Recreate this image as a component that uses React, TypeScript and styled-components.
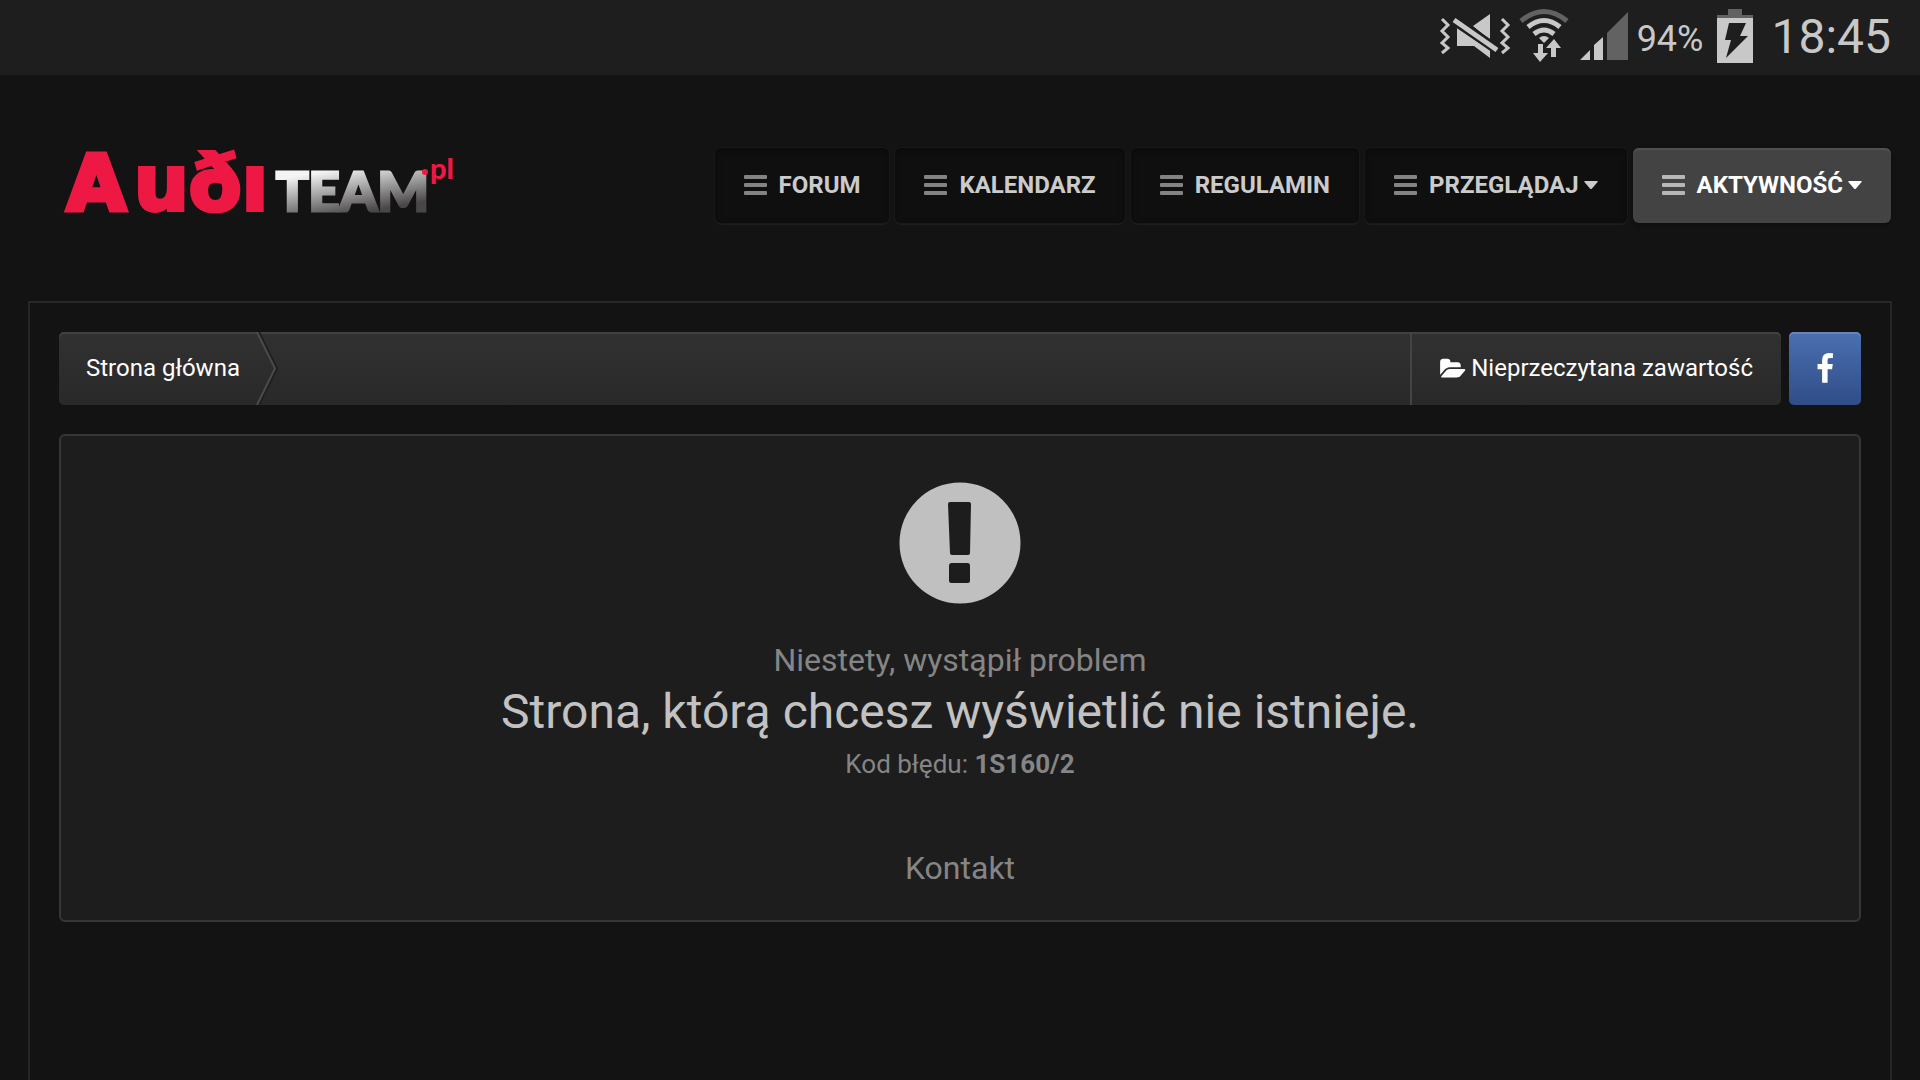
import React from 'react';
import styled, { createGlobalStyle } from 'styled-components';

const GlobalStyle = createGlobalStyle`
  *, *::before, *::after { box-sizing: border-box; }
  body {
    margin: 0;
    background: #131313;
    color: #c2c2c2;
    font-family: Roboto, "Noto Sans", sans-serif;
  }
  a { color: inherit; text-decoration: none; }
  svg { display: block; flex: none; }
`;

const Page = styled.div`
  min-height: 100vh;
  display: flex;
  flex-direction: column;
`;

const StatusBar = styled.div`
  height: 75px;
  padding: 0 29px 0 0;
  display: flex;
  justify-content: flex-end;
  align-items: center;
  background: #1e1e1e;
  color: #c8c8c8;
`;

const StatusIcons = styled.svg`
  margin-right: 8px;
`;

const Percent = styled.span`
  padding-top: 2px;
  font-size: 36px;
  line-height: 72px;
`;

const BatteryIcon = styled.svg`
  margin: 0 18px 4px 14px;
`;

const Clock = styled.time`
  font-size: 48px;
  line-height: 72px;
  padding-bottom: 2px;
`;

const Header = styled.header`
  padding: 56px 29px 61px 59px;
  display: flex;
  justify-content: space-between;
  align-items: center;
`;

const LogoLink = styled.a`
  display: block;
`;

const Nav = styled.nav`
  display: flex;
  gap: 6px;
`;

const NavItem = styled.a<{ $active?: boolean }>`
  height: 75px;
  padding: 0 29px 2px;
  display: flex;
  align-items: center;
  border-radius: 6px;
  font-size: 24px;
  line-height: 28px;
  font-weight: 700;
  text-transform: uppercase;
  color: ${(p) => (p.$active ? '#ffffff' : '#cbcbcb')};
  background: ${(p) => (p.$active ? '#434343' : '#0f0f0f')};
  box-shadow: ${(p) =>
    p.$active
      ? 'inset 0 2px 0 #505050, 0 2px 4px rgba(0, 0, 0, 0.3)'
      : 'inset 0 2px 6px rgba(0, 0, 0, 0.35), 0 0 0 1px #191919, 0 2px 0 #1e1e1e'};
`;

const Bars = styled.svg`
  margin-right: 12px;
  opacity: 0.62;
`;

const Caret = styled.svg`
  margin-left: 5px;
`;

const Content = styled.main`
  flex: 1;
  margin: 0 28px;
  padding: 29px;
  border: 2px solid #272727;
  border-bottom: 0;
`;

const TopRow = styled.div`
  display: flex;
  gap: 8px;
  margin-bottom: 29px;
`;

const Breadcrumb = styled.nav`
  flex: 1;
  height: 73px;
  display: flex;
  align-items: stretch;
  justify-content: space-between;
  border-radius: 5px;
  background: linear-gradient(#313131, #292929);
  box-shadow: inset 0 2px 0 #414141;
  color: #ffffff;
  font-size: 24px;
  line-height: 28px;
`;

const Crumb = styled.a`
  display: flex;
  align-items: center;
  gap: 16px;
  padding-left: 27px;
`;

const Label = styled.span`
  padding-bottom: 2px;
`;

const Unread = styled.a`
  display: flex;
  align-items: center;
  gap: 5px;
  padding: 0 28px;
  border-left: 2px solid #444444;
`;

const FacebookLink = styled.a`
  width: 72px;
  height: 73px;
  display: flex;
  align-items: center;
  justify-content: center;
  border-radius: 5px;
  background: linear-gradient(#4a6fb0, #304d88);
  box-shadow: inset 0 2px 0 #6684bb;
`;

const Panel = styled.section`
  padding: 46px 29px 32px;
  display: flex;
  flex-direction: column;
  align-items: center;
  border: 2px solid #363636;
  border-radius: 6px;
  background: #1d1d1d;
  text-align: center;
`;

const Lead = styled.p`
  margin: 36px 0 0;
  font-size: 32px;
  line-height: 40px;
  color: #858585;
`;

const Title = styled.h1`
  margin: 0;
  font-size: 48px;
  line-height: 64px;
  font-weight: 400;
  color: #c2c2c2;
`;

const Code = styled.p`
  margin: 0;
  font-size: 26px;
  line-height: 40px;
  color: #858585;
`;

const Contact = styled.a`
  margin-top: 64px;
  font-size: 32px;
  line-height: 40px;
  color: #858585;
`;

const MenuItem = ({ label, caret, active }: { label: string; caret?: boolean; active?: boolean }) => (
  <NavItem href="#" $active={active}>
    <Bars width="23" height="20" viewBox="0 0 23 20" fill="currentColor" aria-hidden="true">
      <rect y="0" width="23" height="4" rx="1" />
      <rect y="8" width="23" height="4" rx="1" />
      <rect y="16" width="23" height="4" rx="1" />
    </Bars>
    {label}
    {caret && (
      <Caret width="14" height="8" viewBox="0 0 14 8" fill="currentColor" aria-hidden="true">
        <path d="M1 0h12q1 0 .6 1L8 7.400q-1 1-2 0L.4 1Q0 0 1 0z" />
      </Caret>
    )}
  </NavItem>
);

const Logo = () => (
  <svg width="400" height="109" viewBox="0 -24 400 109" role="img" aria-label="AudiTEAM.pl">
    <defs>
      <linearGradient id="steel" gradientUnits="userSpaceOnUse" x1="280" y1="14" x2="288" y2="60">
        <stop offset="0" stopColor="#f4f4f4" />
        <stop offset="1" stopColor="#4a4749" />
      </linearGradient>
    </defs>
    <g fill="#ee1845" stroke="#ee1845" fontFamily="DejaVu Sans" fontWeight="700">
      <text x="8" y="55" fontSize="76" strokeWidth="5">A</text>
      <text x="75" y="55" fontSize="77" strokeWidth="4">uðı</text>
    </g>
    <text
      x="217"
      y="56"
      fill="url(#steel)"
      stroke="url(#steel)"
      strokeWidth="3"
      fontFamily="Lato"
      fontWeight="900"
      fontSize="54"
    >
      TEAM
    </text>
    <g fill="#ee1845" fontFamily="Lato" fontWeight="900">
      <circle cx="366" cy="17" r="3" />
      <text x="371" y="24" fontSize="29">pl</text>
    </g>
  </svg>
);

export default function App() {
  return (
    <Page>
      <GlobalStyle />
      <StatusBar>
        <StatusIcons width="190" height="75" viewBox="1439 0 190 75" aria-hidden="true">
          <g fill="none" stroke="#c8c8c8" strokeWidth="3">
            <path d="M1442 19l6 6-6 6 6 6-6 6 6 5-6 5" />
            <path d="M1502 19l6 6-6 6 6 6-6 6 6 5-6 5" />
          </g>
          <path fill="#c8c8c8" d="M1473 26l17-12v26z" />
          <path fill="#c8c8c8" d="M1457 28v18h17l16 12v-8z" />
          <path d="M1454 20l45 31" stroke="#1e1e1e" strokeWidth="10" />
          <path d="M1454 20l43 30" stroke="#c8c8c8" strokeWidth="5" />
          <g fill="none" strokeWidth="5">
            <path stroke="#626262" d="M1521 21q23-19 46 0" />
            <path stroke="#c8c8c8" d="M1528 27q16-13 32 0" />
            <path stroke="#c8c8c8" d="M1534 34q10-8 20 0" />
          </g>
          <path fill="#c8c8c8" d="M1539 38q5-4 10 0l-5 5z" />
          <path fill="#c8c8c8" d="M1538 44h5v9h5l-8 9-7-9h5z" />
          <path fill="#c8c8c8" d="M1554 39l7 9h-5v9h-5v-9h-5z" />
          <path fill="#c8c8c8" d="M1580 60l10-10v10zM1594 60v-15l9-8v23z" />
          <path fill="#626262" d="M1607 60V33l21-21v48z" />
        </StatusIcons>
        <Percent>94%</Percent>
        <BatteryIcon width="36" height="54" viewBox="0 0 36 54" aria-hidden="true">
          <path fill="#626262" d="M11 0h14v6h11v3H0V6h11z" />
          <path fill="#c8c8c8" d="M0 9h36v45H0z" />
          <path fill="#1e1e1e" d="M12 14h17l-6 13h8L9 49l5-18H8z" />
        </BatteryIcon>
        <Clock>18:45</Clock>
      </StatusBar>

      <Header>
        <LogoLink href="#">
          <Logo />
        </LogoLink>
        <Nav>
          <MenuItem label="Forum" />
          <MenuItem label="Kalendarz" />
          <MenuItem label="Regulamin" />
          <MenuItem label="Przeglądaj" caret />
          <MenuItem label="Aktywność" caret active />
        </Nav>
      </Header>

      <Content>
        <TopRow>
          <Breadcrumb>
            <Crumb href="#">
              <Label>Strona główna</Label>
              <svg width="22" height="73" viewBox="0 0 22 73" fill="none" aria-hidden="true">
                <path d="M3 0l18 36.500L3 73" stroke="#1f1f1f" strokeWidth="2" />
                <path d="M1 0l18 36.500L1 73" stroke="#4b4b4b" strokeWidth="2" />
              </svg>
            </Crumb>
            <Unread href="#">
              <svg width="26" height="24" viewBox="0 0 1920 1792" fill="currentColor" aria-hidden="true">
                <path d="M1879 952q0 31-31 66l-336 396q-43 51-120.5 86.5t-143.5 35.5h-1088q-34 0-60.5-13t-26.5-43q0-31 31-66l336-396q43-51 120.5-86.5t143.5-35.5h1088q34 0 60.5 13t26.5 43zm-343-344v160h-832q-94 0-197 47.5t-164 119.5l-337 396-5 6q0-4-.5-12.5t-.5-12.5v-960q0-92 66-158t158-66h320q92 0 158 66t66 158v32h544q92 0 158 66t66 158z" />
              </svg>
              <Label>Nieprzeczytana zawartość</Label>
            </Unread>
          </Breadcrumb>
          <FacebookLink href="#" aria-label="Facebook">
            <svg width="32" height="32" viewBox="0 0 1792 1792" fill="#ffffff" aria-hidden="true">
              <path d="M1343 12v264h-157q-86 0-116 36t-30 108v189h293l-39 296h-254v759h-306v-759h-255v-296h255v-218q0-186 104-288.5t277-102.5q147 0 228 12z" />
            </svg>
          </FacebookLink>
        </TopRow>

        <Panel>
          <svg width="122" height="122" viewBox="0 0 122 122" aria-hidden="true">
            <circle cx="61" cy="61" r="60.500" fill="#c0c0c0" />
            <path fill="#1d1d1d" d="M51 20h19q2 0 2 2l-1 49q0 2-2 2H53q-2 0-2-2l-2-49q0-2 2-2z" />
            <rect x="50" y="81" width="21" height="20" rx="2.500" fill="#1d1d1d" />
          </svg>
          <Lead>Niestety, wystąpił problem</Lead>
          <Title>Strona, którą chcesz wyświetlić nie istnieje.</Title>
          <Code>
            Kod błędu: <strong>1S160/2</strong>
          </Code>
          <Contact href="#">Kontakt</Contact>
        </Panel>
      </Content>
    </Page>
  );
}
